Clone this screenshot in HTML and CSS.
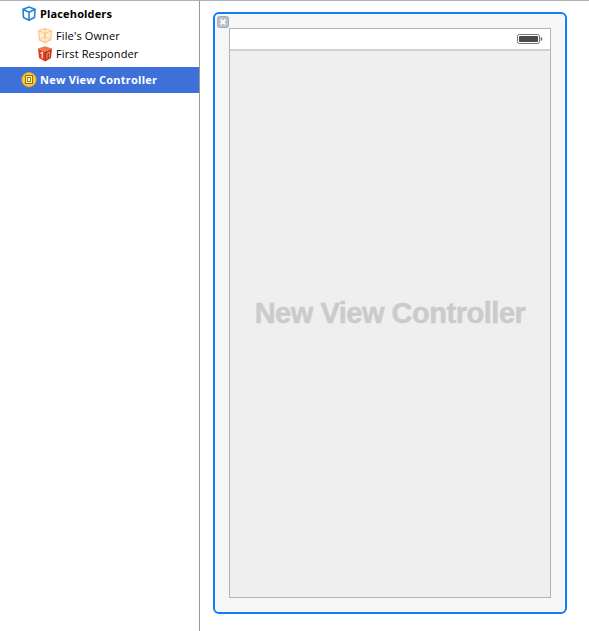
FILE: index.html
```html
<!DOCTYPE html>
<html lang="en">
<head>
<meta charset="utf-8">
<title>New View Controller</title>
<link rel="stylesheet" href="styles.css">
</head>
<body>
<div class="editor">
  <nav class="outline">
    <div class="row group">
      <svg class="icon" viewBox="0 0 16 16"><path d="M8 1 14 3.2 13.5 11.5 8 14.3 2.5 11.5 2 3.2Z M2 3.2 8 6.2 14 3.2 M8 6.2V14.3" fill="#fff" stroke="#2584d6" stroke-width="1.6" stroke-linejoin="round"/></svg>
      <span class="label placeholders">Placeholders</span>
    </div>
    <div class="row child">
      <svg class="icon" viewBox="0 0 16 16"><path d="M8 .6 14.3 2.8 13.7 11.8 8 14.8 2.3 11.8 1.7 2.8Z" fill="#fff0d7" stroke="#fbc37e" stroke-width="1.1"/><path d="M1.7 2.8 8 5.6 14.3 2.8M8 5.6V14.8M8 .8V8.6L2.3 11.8M8 8.6 13.7 11.8" fill="none" stroke="#fbc482"/></svg>
      <span class="label owner">File's Owner</span>
    </div>
    <div class="row child">
      <svg class="icon" viewBox="0 0 16 16"><path d="M8 .3 15 2.6 8 5.4 1 2.6Z" fill="#ee724a"/><path d="M1 2.6 8 5.4V15.4L2 12Z" fill="#da4322"/><path d="M15 2.6 8 5.4V15.4L14 12Z" fill="#b92f17"/><path d="M3.5 7.4 5.3 6.6V12.3" fill="none" stroke="#ffd9c5" stroke-width="1.3"/><path d="M10 13V7.3L12.5 6.2V11.8" fill="none" stroke="#ec8d6c" stroke-width="1.1"/><path d="M1 2.6 8 5.4 15 2.6" fill="none" stroke="#f69a70" stroke-width=".6"/></svg>
      <span class="label responder">First Responder</span>
    </div>
    <div class="row selected">
      <svg class="icon" viewBox="0 0 16 16"><circle cx="8" cy="7.7" r="7.2" fill="#fbcb2e" stroke="#e0a51b" stroke-width=".8"/><rect x="4.5" y="3.5" width="7" height="8" fill="#fff0a0" stroke="#8f6d1c"/><rect x="6.5" y="5.5" width="3" height="4" fill="#fff6c8" stroke="#a37d22"/></svg>
      <span class="label controller">New View Controller</span>
    </div>
  </nav>
  <main class="canvas">
    <section class="scene">
      <svg class="close" viewBox="0 0 12 12"><rect x=".5" y=".5" width="11" height="11" rx="2" fill="#b8c0cc" stroke="#9fa9b7"/><path d="M3.6 3.6 8.4 8.4M8.4 3.6 3.6 8.4" stroke="#fff" stroke-width="2"/></svg>
      <div class="device">
        <div class="status">
          <svg class="battery" viewBox="0 0 26 11"><rect x=".5" y=".5" width="22" height="9" rx="1.8" fill="#fff" stroke="#777"/><rect x="2" y="2" width="19" height="6" rx=".7" fill="#4b4b4b"/><path d="M24 3.2C25.2 3.5 25.2 6.5 24 6.8Z" fill="#666" stroke="#666" stroke-width=".6"/></svg>
        </div>
        <div class="view"><span class="title">New View Controller</span></div>
      </div>
    </section>
  </main>
</div>
</body>
</html>
```

FILE: styles.css
```css
* { box-sizing: border-box; }
body { margin: 0; background: #fff; font-family: "Open Sans", "Noto Sans", sans-serif; }
.editor { display: flex; height: 631px; border-top: 1px solid #b0b0b0; overflow: hidden; }
.outline { width: 200px; border-right: 1px solid #999; font-size: 11px; color: #000; }
.row { display: flex; align-items: center; gap: 3px; height: 18px; padding-left: 21px; white-space: nowrap; }
.icon { width: 16px; height: 16px; flex: none; }
.label { padding-bottom: 2px; letter-spacing: .12px; }
.group { height: 26px; font-weight: 700; }
.child { padding-left: 37px; }
.selected { height: 26px; margin-top: 4px; background: #3d71d9; color: #fff; font-weight: 700; }
.placeholders { letter-spacing: .14px; }
.controller { letter-spacing: .23px; }
.canvas { flex: 1; padding: 11px 0 0 13px; }
.scene { position: relative; width: 354px; height: 602px; padding: 14px; border: 2px solid #0d7dfb; border-radius: 6px; background: #f6f6f6; box-shadow: inset 0 0 0 1px #fff; }
.close { position: absolute; left: 2px; top: 2px; width: 12px; height: 12px; }
.device { display: flex; flex-direction: column; width: 322px; height: 570px; border: 1px solid #b3b3b3; background: #efefef; }
.status { display: flex; justify-content: flex-end; height: 22px; padding: 5px 7px 0 0; border-bottom: 2px solid #d0d0d0; background: #fff; }
.battery { width: 26px; height: 11px; }
.view { flex: 1; display: flex; align-items: center; justify-content: center; padding-bottom: 22px; }
.title { font: 700 29px/34px "Liberation Sans", Arial, sans-serif; letter-spacing: -.48px; color: #cbcbcb; white-space: nowrap; -webkit-text-stroke: .5px #cbcbcb; }
```
